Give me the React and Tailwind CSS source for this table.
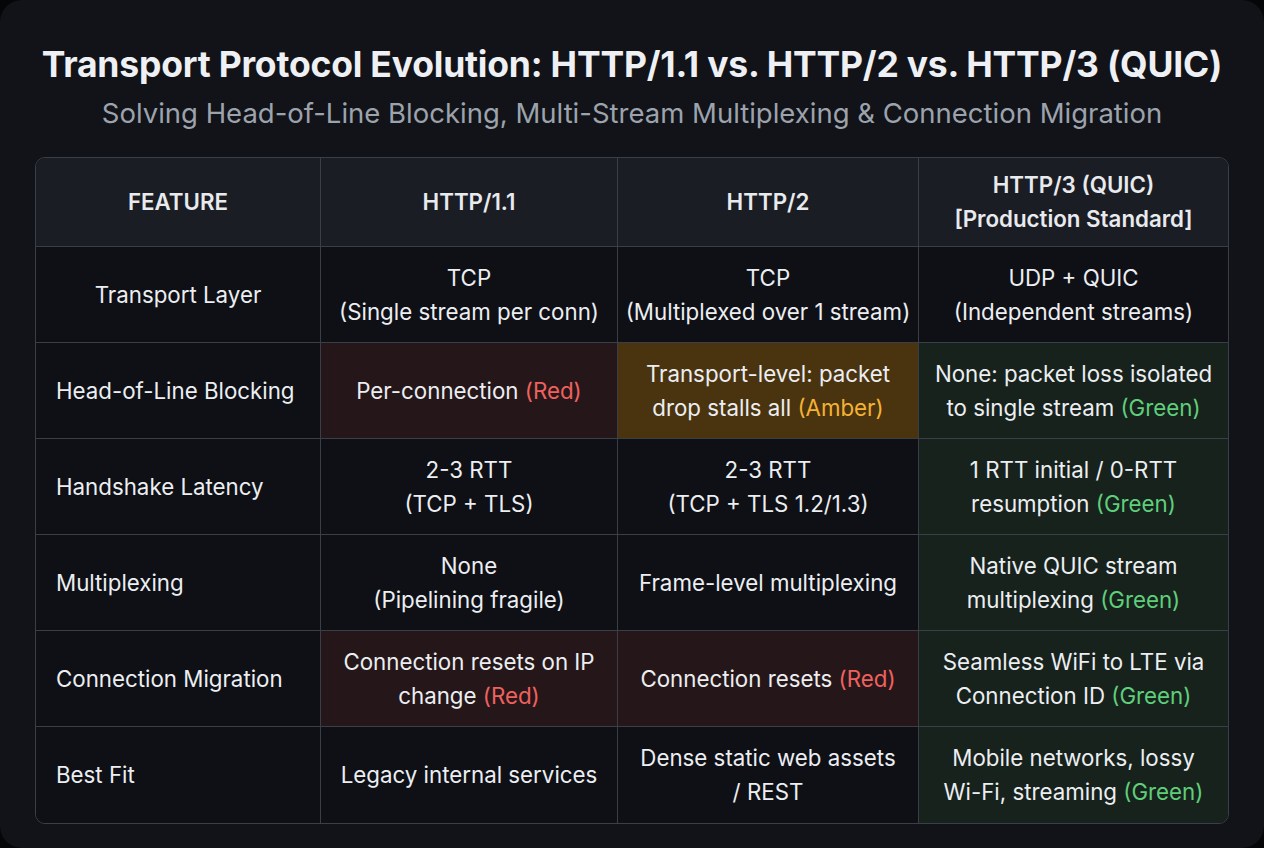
import React from 'react';

const RED = 'text-[#f0615e]';
const AMBER = 'text-[#f5b234]';
const GREEN = 'text-[#5fcf7a]';

const tone = {
  red: 'bg-[#251719]',
  amber: 'bg-[#4a3410]',
  green: 'bg-[#17221d]',
  plain: 'bg-[#0e1016]',
};

const Tag = ({ c, children }) => <span className={c}>{children}</span>;

const rows = [
  {
    feature: 'Transport Layer',
    center: true,
    cells: [
      { t: 'plain', v: <>TCP<br />(Single stream per conn)</> },
      { t: 'plain', v: <>TCP<br />(Multiplexed over 1 stream)</> },
      { t: 'plain', v: <>UDP + QUIC<br />(Independent streams)</> },
    ],
  },
  {
    feature: 'Head-of-Line Blocking',
    cells: [
      { t: 'red', v: <>Per-connection <Tag c={RED}>(Red)</Tag></> },
      { t: 'amber', v: <>Transport-level: packet<br />drop stalls all <Tag c={AMBER}>(Amber)</Tag></> },
      { t: 'green', v: <>None: packet loss isolated<br />to single stream <Tag c={GREEN}>(Green)</Tag></> },
    ],
  },
  {
    feature: 'Handshake Latency',
    cells: [
      { t: 'plain', v: <>2-3 RTT<br />(TCP + TLS)</> },
      { t: 'plain', v: <>2-3 RTT<br />(TCP + TLS 1.2/1.3)</> },
      { t: 'green', v: <>1 RTT initial / 0-RTT<br />resumption <Tag c={GREEN}>(Green)</Tag></> },
    ],
  },
  {
    feature: 'Multiplexing',
    cells: [
      { t: 'plain', v: <>None<br />(Pipelining fragile)</> },
      { t: 'plain', v: <>Frame-level multiplexing</> },
      { t: 'green', v: <>Native QUIC stream<br />multiplexing <Tag c={GREEN}>(Green)</Tag></> },
    ],
  },
  {
    feature: 'Connection Migration',
    cells: [
      { t: 'red', v: <>Connection resets on IP<br />change <Tag c={RED}>(Red)</Tag></> },
      { t: 'red', v: <>Connection resets <Tag c={RED}>(Red)</Tag></> },
      { t: 'green', v: <>Seamless WiFi to LTE via<br />Connection ID <Tag c={GREEN}>(Green)</Tag></> },
    ],
  },
  {
    feature: 'Best Fit',
    cells: [
      { t: 'plain', v: <>Legacy internal services</> },
      { t: 'plain', v: <>Dense static web assets<br />/ REST</> },
      { t: 'green', v: <>Mobile networks, lossy<br />Wi-Fi, streaming <Tag c={GREEN}>(Green)</Tag></> },
    ],
  },
];

export default function App() {
  return (
    <div className="w-[1264px] h-[848px] bg-[#050608] font-['Inter',sans-serif]">
      <div className="h-full rounded-[22px] bg-[#111318] flex flex-col items-center pt-[41px]">
        <h1 className="text-[35.5px] leading-[48px] font-bold text-[#eef0f3] tracking-[-0.2px]">
          Transport Protocol Evolution: HTTP/1.1 vs. HTTP/2 vs. HTTP/3 (QUIC)
        </h1>
        <p className="mt-[4px] text-[27.5px] leading-[40px] text-[#9ca3ad]">
          Solving Head-of-Line Blocking, Multi-Stream Multiplexing &amp; Connection Migration
        </p>

        <div className="mt-[24px] w-[1194px] rounded-[10px] border border-[#3a3f47] overflow-hidden grid grid-cols-[285px_297px_301px_1fr] text-[22.3px] leading-[34px] text-[#eceef1]">
          {['FEATURE', 'HTTP/1.1', 'HTTP/2'].map((h) => (
            <div key={h} className="h-[89px] bg-[#1a1d23] border-r border-b border-[#3a3f47] flex items-center justify-center font-semibold text-[#e8eaee]">
              {h}
            </div>
          ))}
          <div className="h-[89px] bg-[#1a1d23] border-b border-[#3a3f47] flex items-center justify-center text-center font-semibold text-[#e8eaee]">
            HTTP/3 (QUIC)<br />[Production Standard]
          </div>

          {rows.map((r, i) => {
            const last = i === rows.length - 1;
            const b = last ? '' : 'border-b';
            return (
              <React.Fragment key={r.feature}>
                <div className={`h-[96px] bg-[#0e1016] border-r ${b} border-[#3a3f47] flex items-center ${r.center ? 'justify-center' : 'pl-[20px]'}`}>
                  {r.feature}
                </div>
                {r.cells.map((c, j) => (
                  <div
                    key={j}
                    className={`h-[96px] ${tone[c.t]} ${j < 2 ? 'border-r' : ''} ${b} border-[#3a3f47] flex items-center justify-center text-center`}
                  >
                    <div>{c.v}</div>
                  </div>
                ))}
              </React.Fragment>
            );
          })}
        </div>
      </div>
    </div>
  );
}
